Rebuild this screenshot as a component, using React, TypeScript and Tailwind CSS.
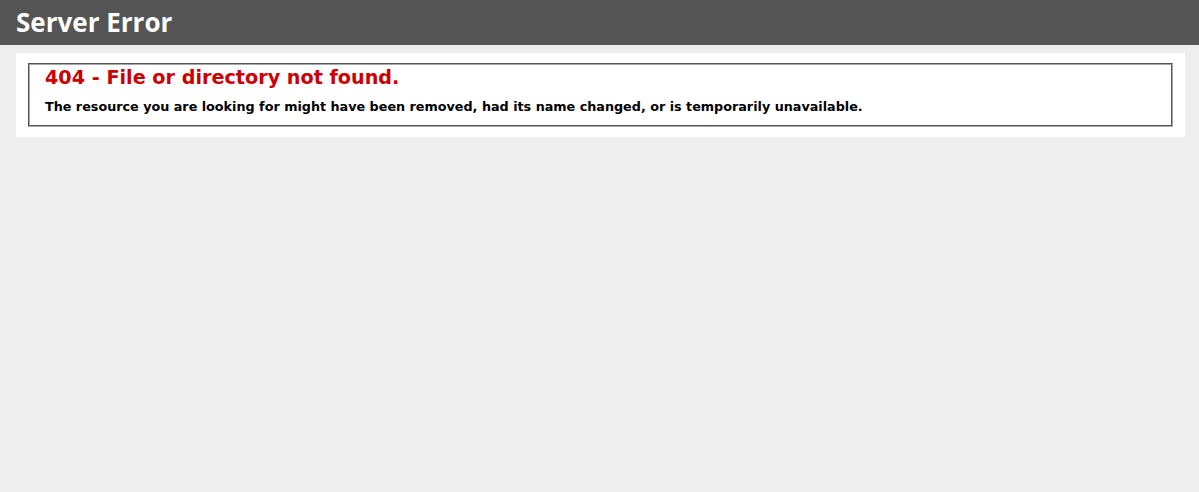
export default function App() {
  return (
    <div className="min-h-[492px] bg-[#eeeeee] font-['DejaVu_Sans',Verdana,sans-serif] text-[11.2px]">
      <div className="h-[45px] bg-[#555555] pl-4 pt-[5px]">
        <h1 className="m-0 font-['Open_Sans',sans-serif] text-[26px] font-bold leading-[34px] text-white">
          Server Error
        </h1>
      </div>
      <div className="ml-4 mt-2 w-[1169px] bg-white p-[10px]">
        <fieldset className="mx-[2px] border-2 border-[#a8a8a8] [border-style:groove] px-[15px] pt-[1px] pb-[10px]">
          <h2 className="m-0 text-[19.2px] font-bold leading-[24px] text-[#cc0000]">
            404 - File or directory not found.
          </h2>
          <h3 className="mt-[9px] text-[12.75px] font-bold leading-[16px] text-black">
            The resource you are looking for might have been removed, had its name changed, or is temporarily unavailable.
          </h3>
        </fieldset>
      </div>
    </div>
  );
}
